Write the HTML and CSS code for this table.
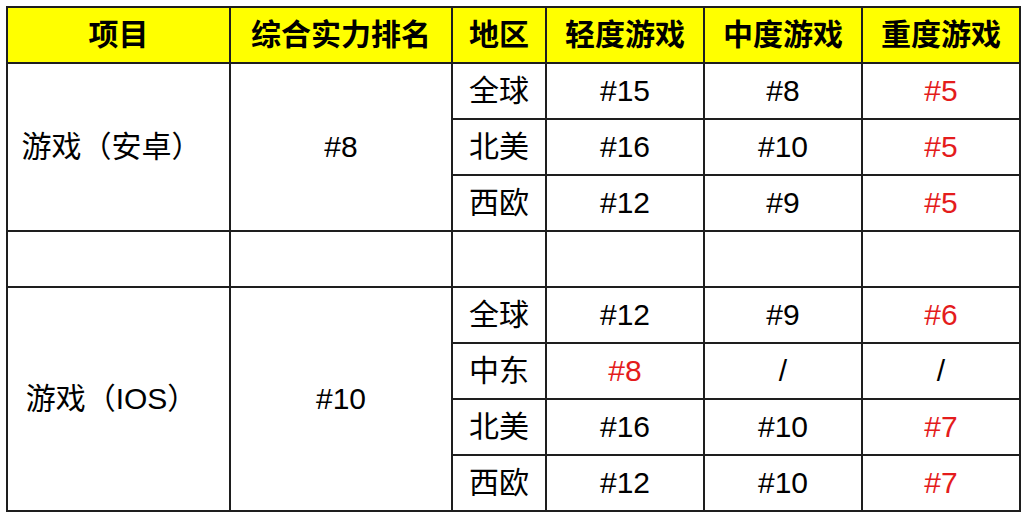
FILE: index.html
```html
<!DOCTYPE html>
<html lang="zh">
<head>
<meta charset="utf-8">
<link rel="stylesheet" href="styles.css">
</head>
<body>
<table class="rank">
  <colgroup>
    <col class="c-item">
    <col class="c-total">
    <col class="c-region">
    <col class="c-game">
    <col class="c-game">
    <col class="c-game">
  </colgroup>
  <thead>
    <tr>
      <th>项目</th>
      <th>综合实力排名</th>
      <th>地区</th>
      <th>轻度游戏</th>
      <th>中度游戏</th>
      <th>重度游戏</th>
    </tr>
  </thead>
  <tbody>
    <tr>
      <td rowspan="3" class="item">游戏（安卓）</td>
      <td rowspan="3">#8</td>
      <td>全球</td>
      <td>#15</td>
      <td>#8</td>
      <td class="hot">#5</td>
    </tr>
    <tr>
      <td>北美</td>
      <td>#16</td>
      <td>#10</td>
      <td class="hot">#5</td>
    </tr>
    <tr>
      <td>西欧</td>
      <td>#12</td>
      <td>#9</td>
      <td class="hot">#5</td>
    </tr>
    <tr>
      <td></td><td></td><td></td><td></td><td></td><td></td>
    </tr>
    <tr>
      <td rowspan="4" class="item">游戏（IOS）</td>
      <td rowspan="4">#10</td>
      <td>全球</td>
      <td>#12</td>
      <td>#9</td>
      <td class="hot">#6</td>
    </tr>
    <tr>
      <td>中东</td>
      <td class="hot">#8</td>
      <td>/</td>
      <td>/</td>
    </tr>
    <tr>
      <td>北美</td>
      <td>#16</td>
      <td>#10</td>
      <td class="hot">#7</td>
    </tr>
    <tr>
      <td>西欧</td>
      <td>#12</td>
      <td>#10</td>
      <td class="hot">#7</td>
    </tr>
  </tbody>
</table>
</body>
</html>
```
FILE: styles.css
```css
html, body {
  margin: 0;
  background: #ffffff;
}
body {
  padding: 6px 0 0 6px;
  font-family: "Liberation Sans", "Noto Sans CJK SC", sans-serif;
  color: #000;
}
.rank {
  border-collapse: collapse;
  table-layout: fixed;
  width: 1013px;
}
.c-item { width: 223px; }
.c-total { width: 222px; }
.c-region { width: 94px; }
.c-game { width: 158px; }
.rank th, .rank td {
  border: 2px solid #1e1e1e;
  height: 54px;
  padding: 0;
  text-align: center;
  vertical-align: middle;
  font-size: 30px;
  line-height: 1;
  white-space: nowrap;
}
.rank th {
  background: #ffff00;
  font-weight: bold;
}
.rank td.item {
  padding-right: 14px;
}
.rank td.hot {
  color: #e41c1c;
}
```
